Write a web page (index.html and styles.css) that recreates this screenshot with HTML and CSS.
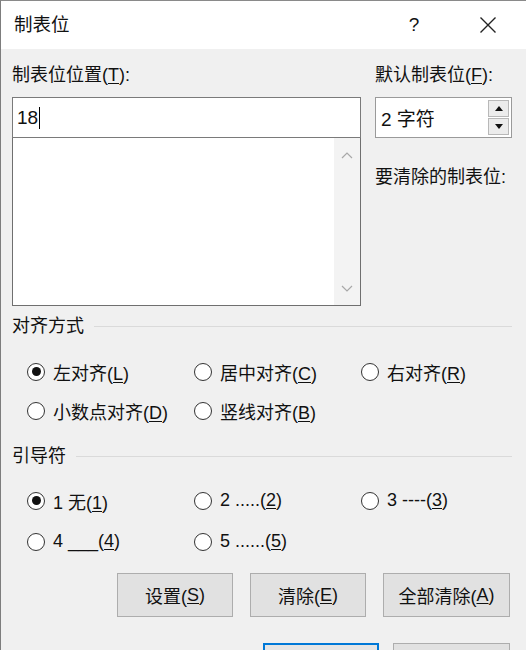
FILE: index.html
```html
<!DOCTYPE html>
<html lang="zh-CN">
<head>
<meta charset="utf-8">
<title>制表位</title>
<link rel="stylesheet" href="styles.css">
</head>
<body>
<div class="window">
  <div class="titlebar">
    <span class="title">制表位</span>
    <span class="help">?</span>
    <span class="close"><svg width="18" height="18" viewBox="0 0 18 18"><path d="M1.5 1.5 L16.5 16.5 M16.5 1.5 L1.5 16.5" stroke="#222" stroke-width="1.4" fill="none"/></svg></span>
  </div>
  <div class="content">
    <div class="top">
      <div class="left-col">
        <div class="label">制表位位置(<u>T</u>):</div>
        <div class="input"><span>18</span><span class="caret"></span></div>
        <div class="list">
          <div class="list-area"></div>
          <div class="scroll">
            <svg width="12" height="8" viewBox="0 0 12 8"><path d="M1 7 L6 2 L11 7" stroke="#a8a8a8" stroke-width="1.2" fill="none"/></svg>
            <svg width="12" height="8" viewBox="0 0 12 8"><path d="M1 1 L6 6 L11 1" stroke="#a8a8a8" stroke-width="1.2" fill="none"/></svg>
          </div>
        </div>
      </div>
      <div class="right-col">
        <div class="label">默认制表位(<u>F</u>):</div>
        <div class="spinner">
          <span class="spin-text">2 字符</span>
          <div class="spin-btns">
            <div class="spin-btn"><svg width="8" height="5" viewBox="0 0 8 5"><path d="M0 5 L4 0 L8 5 Z" fill="#111"/></svg></div>
            <div class="spin-btn"><svg width="8" height="5" viewBox="0 0 8 5"><path d="M0 0 L4 5 L8 0 Z" fill="#111"/></svg></div>
          </div>
        </div>
        <div class="label clear-label">要清除的制表位:</div>
      </div>
    </div>

    <div class="group-head head-align"><span>对齐方式</span><span class="rule"></span></div>
    <div class="radios rows-align">
      <div class="radio"><span class="dot checked"></span><span>左对齐(<u>L</u>)</span></div>
      <div class="radio"><span class="dot"></span><span>居中对齐(<u>C</u>)</span></div>
      <div class="radio"><span class="dot"></span><span>右对齐(<u>R</u>)</span></div>
      <div class="radio"><span class="dot"></span><span>小数点对齐(<u>D</u>)</span></div>
      <div class="radio"><span class="dot"></span><span>竖线对齐(<u>B</u>)</span></div>
    </div>

    <div class="group-head head-leader"><span>引导符</span><span class="rule"></span></div>
    <div class="radios rows-leader">
      <div class="radio"><span class="dot checked"></span><span>1 无(<u>1</u>)</span></div>
      <div class="radio"><span class="dot"></span><span>2 .....(<u>2</u>)</span></div>
      <div class="radio"><span class="dot"></span><span>3 ----(<u>3</u>)</span></div>
      <div class="radio"><span class="dot"></span><span>4 ___(<u>4</u>)</span></div>
      <div class="radio"><span class="dot"></span><span>5 ......(<u>5</u>)</span></div>
    </div>

    <div class="buttons">
      <div class="btn w115">设置(<u>S</u>)</div>
      <div class="btn w115">清除(<u>E</u>)</div>
      <div class="btn w126">全部清除(<u>A</u>)</div>
    </div>
    <div class="buttons bottom">
      <div class="btn w115 primary"></div>
      <div class="btn w116"></div>
    </div>
  </div>
</div>
</body>
</html>
```
FILE: styles.css
```css
* { box-sizing: border-box; }
html, body { margin: 0; padding: 0; }
body {
  width: 526px;
  height: 650px;
  overflow: hidden;
  font-family: "Liberation Sans", "Noto Sans CJK SC", sans-serif;
  font-size: 18px;
  color: #111;
  background: #f0f0f0;
}
u { text-decoration: underline; text-underline-offset: 2px; text-decoration-thickness: 1px; }

.window {
  width: 526px;
  height: 650px;
  border-left: 1px solid #7d7d7d;
  border-top: 1px solid #8a8a8a;
  background: #f0f0f0;
  overflow: hidden;
}
.titlebar {
  height: 48px;
  background: #fff;
  display: flex;
  align-items: center;
  padding-left: 13px;
}
.title { font-size: 18.5px; line-height: 22px; flex: 1; }
.help { font-size: 19px; width: 20px; text-align: center; margin-right: 55px; }
.close { width: 18px; height: 18px; margin-right: 29px; display: flex; }

.content { padding: 15px 0 0 11px; }

.top { display: grid; grid-template-columns: 349px 137px; column-gap: 14px; }
.label { height: 22px; line-height: 22px; white-space: nowrap; }
.left-col .label, .right-col > .label:first-child { margin-bottom: 11px; }

.input {
  height: 41px;
  border: 1px solid #7a7a7a;
  background: #fff;
  display: flex;
  align-items: center;
  padding-left: 4px;
  font-size: 19px;
}
.caret { width: 1px; height: 22px; background: #000; margin-left: 1px; }

.list {
  height: 168px;
  border: 1px solid #6f6f6f;
  border-top: none;
  background: #fff;
  display: flex;
}
.list-area { flex: 1; }
.scroll {
  width: 26px;
  background: #f3f3f3;
  display: flex;
  flex-direction: column;
  justify-content: space-between;
  align-items: center;
  padding: 13px 0 12px;
}

.spinner {
  height: 41px;
  border: 1px solid #9a9a9a;
  background: #fff;
  display: flex;
  align-items: center;
  padding-left: 5px;
  padding-right: 2px;
}
.spin-text { flex: 1; font-size: 19px; }
.spin-btns { display: flex; flex-direction: column; gap: 1px; }
.spin-btn {
  width: 21px;
  height: 17px;
  background: #ececec;
  border: 1px solid #b8b8b8;
  display: flex;
  align-items: center;
  justify-content: center;
}
.clear-label { margin-top: 28px; }

.group-head { display: flex; align-items: center; height: 22px; line-height: 22px; padding-right: 14px; }
.group-head .rule { flex: 1; height: 1px; background: #dadada; margin-left: 10px; }
.head-align { margin-top: 9px; }
.head-leader { margin-top: 15px; }

.radios { display: grid; grid-template-columns: 167px 167px 140px; padding-left: 15px; }
.rows-align { margin-top: 15px; grid-auto-rows: 39px; }
.rows-leader { margin-top: 13px; grid-auto-rows: 41px; }
.radio { display: flex; align-items: center; white-space: nowrap; }
.dot {
  width: 18px;
  height: 18px;
  border: 1px solid #333;
  border-radius: 50%;
  background: #fff;
  margin-right: 8px;
  display: flex;
  align-items: center;
  justify-content: center;
}
.dot.checked::after {
  content: "";
  width: 9px;
  height: 9px;
  border-radius: 50%;
  background: #111;
}

.buttons { display: flex; justify-content: flex-end; gap: 17px; padding-right: 16px; margin-top: 11px; }
.btn {
  height: 44px;
  border: 1px solid #adadad;
  background: #e1e1e1;
  display: flex;
  align-items: center;
  justify-content: center;
  white-space: nowrap;
}
.w115 { width: 116px; }
.w116 { width: 117px; }
.w126 { width: 127px; }
.buttons.bottom { margin-top: 26px; gap: 14px; }
.btn.primary { border: 2px solid #0078d7; background: #e5e5e5; }
```
